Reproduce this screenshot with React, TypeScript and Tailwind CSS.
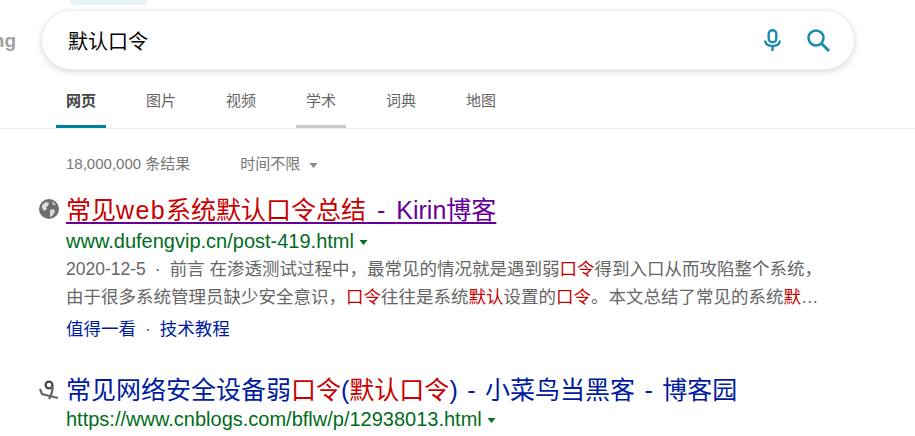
import React from "react";

const tabs = ["网页", "图片", "视频", "学术", "词典", "地图"];

// red highlighted keyword
const Hit = ({ children }: { children: React.ReactNode }) => <span className="text-[#c80000]">{children}</span>;

const Caret = ({ color, className }: { color: string; className: string }) => (
    <svg width="9" height="5" viewBox="0 0 9 5" className={`${className} mt-[3px] shrink-0`}>
        <path d="M0.5 0H8.5L4.5 5Z" fill={color} />
    </svg>
);

const GlobeIcon = () => (
    <svg width="20" height="20" viewBox="0 0 20 20" className="shrink-0">
        <circle cx="10" cy="10" r="10" fill="#6e6e6e" />
        <path d="M3 6 L7 3 L10 4 L9 7 L7 8 L8 10 L5 12 L3 9 Z" fill="#dcdcdc" />
        <path d="M11 11 L15 10 L16 13 L13 17 L11 18 Z" fill="#dcdcdc" />
        <path d="M13 2 L17 6 L14 6 Z" fill="#dcdcdc" />
    </svg>
);

const BlogIcon = () => (
    <svg width="20" height="22" viewBox="0 0 20 22" className="shrink-0" fill="none">
        <path d="M1 10 L3 15 L19 19" stroke="#666" strokeWidth="2.2" />
        <circle cx="10" cy="6" r="3.4" stroke="#444" strokeWidth="2.2" />
        <path d="M13.5 6 C14 11 13 15 10 20" stroke="#666" strokeWidth="2.2" />
    </svg>
);

export default function App() {
    return (
        <div className="w-[915px] h-[436px] overflow-hidden bg-white font-['Liberation_Sans','Noto_Sans_CJK_SC',sans-serif]">
            {/* header */}
            <div className="ml-[70px] w-[77px] h-[5px] rounded-b-xl bg-[#e6f2f6]"></div>
            <div className="mt-[5px] flex items-center">
                <div className="w-[16px] mr-[25px] overflow-hidden flex justify-end">
                    <span className="pt-[3px] text-[19px] font-bold text-[#a0a0a0] whitespace-nowrap">ng</span>
                </div>
                <div className="w-[814px] h-[60px] pl-[26px] pr-[24px] flex items-center rounded-full bg-white border border-[#ececec] shadow-[0_2px_6px_rgba(0,0,0,0.14)]">
                    <span className="flex-1 pt-[3px] text-[20px] text-black">默认口令</span>
                    <svg width="17" height="22" viewBox="0 0 17 22" fill="none" className="mr-[26px]">
                        <rect x="4.7" y="1.2" width="7.6" height="12" rx="3.8" stroke="#1a8bab" strokeWidth="2.4" />
                        <path d="M1 11.5 C1.5 15.5 4.5 17 8.5 17 C12.5 17 15.5 15.5 16 11.5" stroke="#1a8bab" strokeWidth="2.2" />
                        <path d="M8.5 16.5 V22" stroke="#1a8bab" strokeWidth="2.4" />
                    </svg>
                    <svg width="23" height="23" viewBox="0 0 23 23" fill="none">
                        <circle cx="9" cy="9" r="7.5" stroke="#1a8bab" strokeWidth="2.5" />
                        <path d="M14.5 14.5 L22 22" stroke="#1a8bab" strokeWidth="2.8" />
                    </svg>
                </div>
            </div>

            {/* tabs */}
            <div className="mt-[20px] h-[39px] border-b border-[#ececec] pl-[56px] flex">
                {tabs.map((tab, i) => (
                    <div
                        key={tab}
                        className={`w-[50px] mr-[30px] h-[38px] pt-[1px] text-center text-[15px] leading-[20px] border-b-[3px] ${
                            i === 0
                                ? "border-[#00809d] font-bold text-[#444]"
                                : i === 3
                                ? "border-[#c8c8c8] text-[#666]"
                                : "border-transparent text-[#666]"
                        }`}
                    >
                        {tab}
                    </div>
                ))}
            </div>

            {/* results */}
            <div className="mt-[25px] ml-[66px] flex items-center text-[15px] leading-[20px] text-[#767676]">
                <span>18,000,000 条结果</span>
                <span className="ml-[50px]">时间不限</span>
                <Caret color="#888" className="ml-[9px]" />
            </div>

            <div className="mt-[20px] ml-[39px] flex gap-[7px]">
                <div className="mt-[5px]"><GlobeIcon /></div>
                <div className="w-[790px]">
                    <div className="text-[25px] leading-[32px] text-[#609] underline decoration-[2px] underline-offset-[3px] whitespace-nowrap">
                        <Hit>常见<span className="tracking-[1.4px]">web</span>系统默认口令总结</Hit>
                        <span className="[word-spacing:4px]"> - </span>Kirin博客
                    </div>
                    <div className="mt-[3px] flex items-center text-[20px] leading-[24px] text-[#006d21]">
                        www.dufengvip.cn/post-419.html
                        <Caret color="#006d21" className="ml-[5px]" />
                    </div>
                    <p className="mt-[2px] text-[17.5px] leading-[28px] text-[#666] whitespace-nowrap">
                        2020-12-5<span className="mx-[9px]">·</span>前言 在渗透测试过程中，最常见的情况就是遇到弱<Hit>口令</Hit>得到入口从而攻陷整个系统，
                        <br />
                        由于很多系统管理员缺少安全意识，<Hit>口令</Hit>往往是系统<Hit>默认</Hit>设置的<Hit>口令</Hit>。本文总结了常见的系统<Hit>默</Hit>…
                    </p>
                    <div className="mt-[6px] text-[17.5px] leading-[24px] text-[#001ba0]">
                        值得一看<span className="text-[#666] mx-[9px]">·</span>技术教程
                    </div>
                </div>
            </div>

            <div className="mt-[33px] ml-[39px] flex gap-[7px]">
                <div className="mt-[5px]"><BlogIcon /></div>
                <div>
                    <div className="text-[25px] leading-[32px] text-[#001ba0] whitespace-nowrap">
                        常见网络安全设备弱<Hit>口令</Hit>(<Hit>默认口令</Hit>)
                        <span className="[word-spacing:2.5px]"> - </span>小菜鸟当黑客<span className="[word-spacing:2.5px]"> - </span>博客园
                    </div>
                    <div className="mt-[1px] flex items-center text-[20px] leading-[24px] text-[#006d21]">
                        https://www.cnblogs.com/bflw/p/12938013.html
                        <Caret color="#006d21" className="ml-[5px]" />
                    </div>
                </div>
            </div>
        </div>
    );
}
